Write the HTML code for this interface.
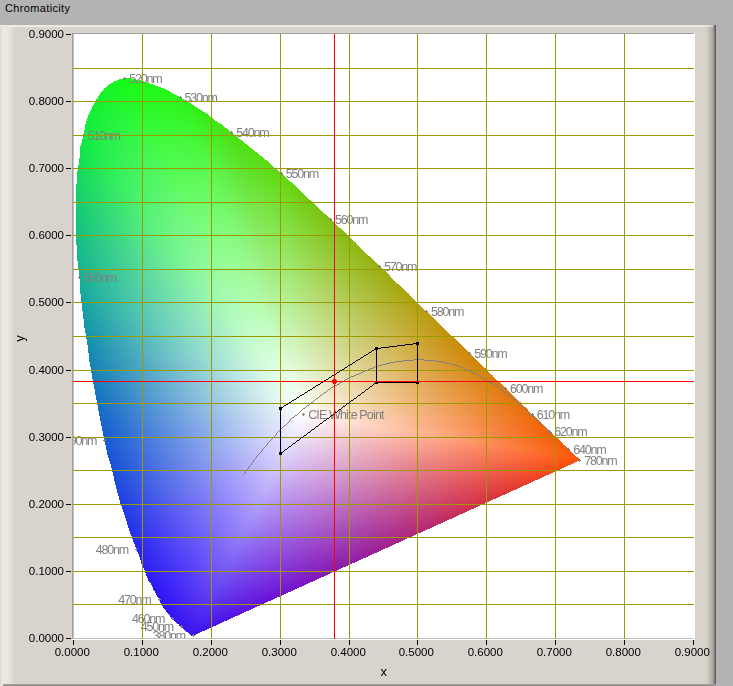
<!DOCTYPE html>
<html><head><meta charset="utf-8"><title>Chromaticity</title>
<style>
html,body{margin:0;padding:0;}
body{width:733px;height:686px;overflow:hidden;background:#b3b3b3;position:relative;font-family:"Liberation Sans",sans-serif;}
.a{position:absolute;}
#title{left:5px;top:2px;font-size:11px;letter-spacing:0.35px;color:#000;}
#panel{left:0;top:25px;width:716px;height:661px;background:#d8d4cd;}
#ltop{left:0;top:0;width:713px;height:2px;background:linear-gradient(to right,#eeeae1 0,#eeeae1 700px,#e6e2d9 708px,#d0ccc4 713px);}
#lgrad{left:0;top:2px;width:14px;height:659px;background:linear-gradient(to right,#dcd8d0 0px,#e6e2d9 1.5px,#eeeae1 3px,#ebe7df 6px,#e6e2da 10px,#e0dcd3 12.5px,#d8d4cd 14px);}
#rgrad{left:703px;top:0px;width:13px;height:661px;background:linear-gradient(to right,#d8d4cd 0px,#d6d2c8 3px,#c6c2ba 6px,#b0aca4 9px,#98948d 11px,#6c6a64 12px,#4e4c48 13px);}
#bot{left:3px;top:659px;width:713px;height:2px;background:linear-gradient(to bottom,#a6a29a,#8e8a84);}
canvas{position:absolute;left:0;top:0;}
#labs{left:74px;top:34px;width:620px;height:604px;overflow:hidden;}
.l{position:absolute;font-size:12.5px;letter-spacing:-1.2px;color:#808080;white-space:nowrap;line-height:12px;}
.yl{position:absolute;font-size:11.5px;color:#000;line-height:12px;text-align:right;width:60px;}
.xl{position:absolute;font-size:11.5px;color:#000;line-height:12px;text-align:center;width:60px;}
</style></head>
<body>
<div id="title" class="a">Chromaticity</div>
<div id="panel" class="a"><div id="lgrad" class="a"></div><div id="rgrad" class="a"></div><div id="ltop" class="a"></div><div id="bot" class="a"></div></div>
<svg class="a" style="left:0;top:0" width="733" height="686"><defs><linearGradient id="g0" gradientUnits="userSpaceOnUse" x1="302.6" y1="414.3" x2="257.3" y2="647.2"><stop offset="0" stop-color="#fff"/><stop offset="1" stop-color="rgb(60,20,240)"/></linearGradient><linearGradient id="g1" gradientUnits="userSpaceOnUse" x1="302.6" y1="414.3" x2="351.7" y2="590.5"><stop offset="0" stop-color="#fff"/><stop offset="1" stop-color="rgb(60,20,240)"/></linearGradient><linearGradient id="g2" gradientUnits="userSpaceOnUse" x1="302.6" y1="414.3" x2="302.6" y2="634.7"><stop offset="0" stop-color="#fff"/><stop offset="1" stop-color="rgb(60,20,240)"/></linearGradient><linearGradient id="g3" gradientUnits="userSpaceOnUse" x1="302.6" y1="414.3" x2="369.7" y2="540.6"><stop offset="0" stop-color="#fff"/><stop offset="1" stop-color="rgb(60,20,240)"/></linearGradient><linearGradient id="g4" gradientUnits="userSpaceOnUse" x1="302.6" y1="414.3" x2="315.6" y2="627.3"><stop offset="0" stop-color="#fff"/><stop offset="1" stop-color="rgb(60,20,240)"/></linearGradient><linearGradient id="g5" gradientUnits="userSpaceOnUse" x1="302.6" y1="414.3" x2="292.7" y2="639.2"><stop offset="0" stop-color="#fff"/><stop offset="1" stop-color="rgb(60,20,240)"/></linearGradient><linearGradient id="g6" gradientUnits="userSpaceOnUse" x1="302.6" y1="414.3" x2="289.1" y2="640.6"><stop offset="0" stop-color="#fff"/><stop offset="1" stop-color="rgb(60,20,240)"/></linearGradient><linearGradient id="g7" gradientUnits="userSpaceOnUse" x1="302.6" y1="414.3" x2="214.0" y2="643.4"><stop offset="0" stop-color="#fff"/><stop offset="1" stop-color="rgb(60,20,240)"/></linearGradient><linearGradient id="g8" gradientUnits="userSpaceOnUse" x1="302.6" y1="414.3" x2="175.1" y2="624.9"><stop offset="0" stop-color="#fff"/><stop offset="1" stop-color="rgb(60,20,240)"/></linearGradient><linearGradient id="g9" gradientUnits="userSpaceOnUse" x1="302.6" y1="414.3" x2="155.5" y2="607.6"><stop offset="0" stop-color="#fff"/><stop offset="1" stop-color="rgb(60,20,240)"/></linearGradient><linearGradient id="g10" gradientUnits="userSpaceOnUse" x1="302.6" y1="414.3" x2="150.0" y2="601.2"><stop offset="0" stop-color="#fff"/><stop offset="1" stop-color="rgb(60,20,240)"/></linearGradient><linearGradient id="g11" gradientUnits="userSpaceOnUse" x1="302.6" y1="414.3" x2="143.0" y2="591.7"><stop offset="0" stop-color="#fff"/><stop offset="1" stop-color="rgb(60,20,240)"/></linearGradient><linearGradient id="g12" gradientUnits="userSpaceOnUse" x1="302.6" y1="414.3" x2="146.0" y2="596.0"><stop offset="0" stop-color="#fff"/><stop offset="1" stop-color="rgb(60,20,240)"/></linearGradient><linearGradient id="g13" gradientUnits="userSpaceOnUse" x1="302.6" y1="414.3" x2="146.7" y2="596.9"><stop offset="0" stop-color="#fff"/><stop offset="1" stop-color="rgb(60,20,240)"/></linearGradient><linearGradient id="g14" gradientUnits="userSpaceOnUse" x1="302.6" y1="414.3" x2="145.4" y2="595.2"><stop offset="0" stop-color="#fff"/><stop offset="1" stop-color="rgb(58,20,241)"/></linearGradient><linearGradient id="g15" gradientUnits="userSpaceOnUse" x1="302.6" y1="414.3" x2="137.9" y2="585.0"><stop offset="0" stop-color="#fff"/><stop offset="1" stop-color="rgb(54,20,243)"/></linearGradient><linearGradient id="g16" gradientUnits="userSpaceOnUse" x1="302.6" y1="414.3" x2="126.5" y2="564.5"><stop offset="0" stop-color="#fff"/><stop offset="1" stop-color="rgb(50,19,245)"/></linearGradient><linearGradient id="g17" gradientUnits="userSpaceOnUse" x1="302.6" y1="414.3" x2="116.9" y2="535.4"><stop offset="0" stop-color="#fff"/><stop offset="1" stop-color="rgb(46,18,247)"/></linearGradient><linearGradient id="g18" gradientUnits="userSpaceOnUse" x1="302.6" y1="414.3" x2="113.4" y2="511.5"><stop offset="0" stop-color="#fff"/><stop offset="1" stop-color="rgb(43,22,246)"/></linearGradient><linearGradient id="g19" gradientUnits="userSpaceOnUse" x1="302.6" y1="414.3" x2="112.6" y2="492.1"><stop offset="0" stop-color="#fff"/><stop offset="1" stop-color="rgb(41,31,242)"/></linearGradient><linearGradient id="g20" gradientUnits="userSpaceOnUse" x1="302.6" y1="414.3" x2="112.1" y2="479.2"><stop offset="0" stop-color="#fff"/><stop offset="1" stop-color="rgb(35,49,232)"/></linearGradient><linearGradient id="g21" gradientUnits="userSpaceOnUse" x1="302.6" y1="414.3" x2="110.1" y2="463.2"><stop offset="0" stop-color="#fff"/><stop offset="1" stop-color="rgb(25,76,217)"/></linearGradient><linearGradient id="g22" gradientUnits="userSpaceOnUse" x1="302.6" y1="414.3" x2="106.5" y2="451.8"><stop offset="0" stop-color="#fff"/><stop offset="1" stop-color="rgb(20,111,195)"/></linearGradient><linearGradient id="g23" gradientUnits="userSpaceOnUse" x1="302.6" y1="414.3" x2="99.0" y2="439.7"><stop offset="0" stop-color="#fff"/><stop offset="1" stop-color="rgb(20,154,165)"/></linearGradient><linearGradient id="g24" gradientUnits="userSpaceOnUse" x1="302.6" y1="414.3" x2="84.2" y2="422.6"><stop offset="0" stop-color="#fff"/><stop offset="1" stop-color="rgb(19,191,128)"/></linearGradient><linearGradient id="g25" gradientUnits="userSpaceOnUse" x1="302.6" y1="414.3" x2="55.3" y2="387.6"><stop offset="0" stop-color="#fff"/><stop offset="1" stop-color="rgb(17,221,85)"/></linearGradient><linearGradient id="g26" gradientUnits="userSpaceOnUse" x1="302.6" y1="414.3" x2="15.9" y2="295.4"><stop offset="0" stop-color="#fff"/><stop offset="1" stop-color="rgb(17,239,53)"/></linearGradient><linearGradient id="g27" gradientUnits="userSpaceOnUse" x1="302.6" y1="414.3" x2="107.6" y2="88.4"><stop offset="0" stop-color="#fff"/><stop offset="1" stop-color="rgb(19,246,31)"/></linearGradient><linearGradient id="g28" gradientUnits="userSpaceOnUse" x1="302.6" y1="414.3" x2="356.9" y2="121.6"><stop offset="0" stop-color="#fff"/><stop offset="1" stop-color="rgb(25,248,21)"/></linearGradient><linearGradient id="g29" gradientUnits="userSpaceOnUse" x1="302.6" y1="414.3" x2="404.0" y2="206.9"><stop offset="0" stop-color="#fff"/><stop offset="1" stop-color="rgb(35,246,23)"/></linearGradient><linearGradient id="g30" gradientUnits="userSpaceOnUse" x1="302.6" y1="414.3" x2="410.5" y2="240.0"><stop offset="0" stop-color="#fff"/><stop offset="1" stop-color="rgb(48,239,22)"/></linearGradient><linearGradient id="g31" gradientUnits="userSpaceOnUse" x1="302.6" y1="414.3" x2="412.3" y2="262.8"><stop offset="0" stop-color="#fff"/><stop offset="1" stop-color="rgb(64,229,18)"/></linearGradient><linearGradient id="g32" gradientUnits="userSpaceOnUse" x1="302.6" y1="414.3" x2="412.5" y2="278.4"><stop offset="0" stop-color="#fff"/><stop offset="1" stop-color="rgb(78,222,16)"/></linearGradient><linearGradient id="g33" gradientUnits="userSpaceOnUse" x1="302.6" y1="414.3" x2="412.5" y2="288.1"><stop offset="0" stop-color="#fff"/><stop offset="1" stop-color="rgb(90,218,16)"/></linearGradient><linearGradient id="g34" gradientUnits="userSpaceOnUse" x1="302.6" y1="414.3" x2="412.7" y2="293.6"><stop offset="0" stop-color="#fff"/><stop offset="1" stop-color="rgb(104,210,16)"/></linearGradient><linearGradient id="g35" gradientUnits="userSpaceOnUse" x1="302.6" y1="414.3" x2="412.9" y2="296.7"><stop offset="0" stop-color="#fff"/><stop offset="1" stop-color="rgb(120,198,16)"/></linearGradient><linearGradient id="g36" gradientUnits="userSpaceOnUse" x1="302.6" y1="414.3" x2="413.2" y2="298.2"><stop offset="0" stop-color="#fff"/><stop offset="1" stop-color="rgb(134,188,16)"/></linearGradient><linearGradient id="g37" gradientUnits="userSpaceOnUse" x1="302.6" y1="414.3" x2="413.5" y2="299.1"><stop offset="0" stop-color="#fff"/><stop offset="1" stop-color="rgb(146,180,16)"/></linearGradient><linearGradient id="g38" gradientUnits="userSpaceOnUse" x1="302.6" y1="414.3" x2="413.8" y2="299.5"><stop offset="0" stop-color="#fff"/><stop offset="1" stop-color="rgb(160,171,16)"/></linearGradient><linearGradient id="g39" gradientUnits="userSpaceOnUse" x1="302.6" y1="414.3" x2="413.9" y2="299.7"><stop offset="0" stop-color="#fff"/><stop offset="1" stop-color="rgb(176,161,16)"/></linearGradient><linearGradient id="g40" gradientUnits="userSpaceOnUse" x1="302.6" y1="414.3" x2="413.9" y2="299.6"><stop offset="0" stop-color="#fff"/><stop offset="1" stop-color="rgb(190,151,14)"/></linearGradient><linearGradient id="g41" gradientUnits="userSpaceOnUse" x1="302.6" y1="414.3" x2="413.8" y2="299.6"><stop offset="0" stop-color="#fff"/><stop offset="1" stop-color="rgb(202,141,10)"/></linearGradient><linearGradient id="g42" gradientUnits="userSpaceOnUse" x1="302.6" y1="414.3" x2="414.1" y2="299.7"><stop offset="0" stop-color="#fff"/><stop offset="1" stop-color="rgb(212,132,8)"/></linearGradient><linearGradient id="g43" gradientUnits="userSpaceOnUse" x1="302.6" y1="414.3" x2="413.9" y2="299.6"><stop offset="0" stop-color="#fff"/><stop offset="1" stop-color="rgb(220,124,8)"/></linearGradient><linearGradient id="g44" gradientUnits="userSpaceOnUse" x1="302.6" y1="414.3" x2="413.9" y2="299.6"><stop offset="0" stop-color="#fff"/><stop offset="1" stop-color="rgb(226,116,8)"/></linearGradient><linearGradient id="g45" gradientUnits="userSpaceOnUse" x1="302.6" y1="414.3" x2="413.4" y2="299.6"><stop offset="0" stop-color="#fff"/><stop offset="1" stop-color="rgb(231,110,8)"/></linearGradient><linearGradient id="g46" gradientUnits="userSpaceOnUse" x1="302.6" y1="414.3" x2="413.9" y2="299.6"><stop offset="0" stop-color="#fff"/><stop offset="1" stop-color="rgb(237,104,8)"/></linearGradient><linearGradient id="g47" gradientUnits="userSpaceOnUse" x1="302.6" y1="414.3" x2="414.3" y2="299.6"><stop offset="0" stop-color="#fff"/><stop offset="1" stop-color="rgb(242,98,8)"/></linearGradient><linearGradient id="g48" gradientUnits="userSpaceOnUse" x1="302.6" y1="414.3" x2="413.4" y2="299.7"><stop offset="0" stop-color="#fff"/><stop offset="1" stop-color="rgb(245,94,8)"/></linearGradient><linearGradient id="g49" gradientUnits="userSpaceOnUse" x1="302.6" y1="414.3" x2="413.7" y2="299.6"><stop offset="0" stop-color="#fff"/><stop offset="1" stop-color="rgb(245,93,8)"/></linearGradient><linearGradient id="g50" gradientUnits="userSpaceOnUse" x1="302.6" y1="414.3" x2="414.2" y2="299.6"><stop offset="0" stop-color="#fff"/><stop offset="1" stop-color="rgb(246,92,8)"/></linearGradient><linearGradient id="g51" gradientUnits="userSpaceOnUse" x1="302.6" y1="414.3" x2="414.4" y2="299.5"><stop offset="0" stop-color="#fff"/><stop offset="1" stop-color="rgb(247,91,8)"/></linearGradient><linearGradient id="g52" gradientUnits="userSpaceOnUse" x1="302.6" y1="414.3" x2="413.8" y2="299.6"><stop offset="0" stop-color="#fff"/><stop offset="1" stop-color="rgb(247,90,8)"/></linearGradient><linearGradient id="g53" gradientUnits="userSpaceOnUse" x1="302.6" y1="414.3" x2="413.5" y2="299.7"><stop offset="0" stop-color="#fff"/><stop offset="1" stop-color="rgb(248,89,8)"/></linearGradient><linearGradient id="g54" gradientUnits="userSpaceOnUse" x1="302.6" y1="414.3" x2="414.4" y2="299.5"><stop offset="0" stop-color="#fff"/><stop offset="1" stop-color="rgb(249,88,8)"/></linearGradient><linearGradient id="g55" gradientUnits="userSpaceOnUse" x1="302.6" y1="414.3" x2="414.4" y2="299.5"><stop offset="0" stop-color="#fff"/><stop offset="1" stop-color="rgb(249,87,8)"/></linearGradient><linearGradient id="g56" gradientUnits="userSpaceOnUse" x1="302.6" y1="414.3" x2="414.4" y2="299.5"><stop offset="0" stop-color="#fff"/><stop offset="1" stop-color="rgb(250,87,8)"/></linearGradient><linearGradient id="g57" gradientUnits="userSpaceOnUse" x1="302.6" y1="414.3" x2="414.4" y2="299.5"><stop offset="0" stop-color="#fff"/><stop offset="1" stop-color="rgb(250,86,8)"/></linearGradient><linearGradient id="g58" gradientUnits="userSpaceOnUse" x1="302.6" y1="414.3" x2="414.4" y2="299.5"><stop offset="0" stop-color="#fff"/><stop offset="1" stop-color="rgb(251,85,8)"/></linearGradient><linearGradient id="g59" gradientUnits="userSpaceOnUse" x1="302.6" y1="414.3" x2="414.4" y2="299.5"><stop offset="0" stop-color="#fff"/><stop offset="1" stop-color="rgb(252,84,8)"/></linearGradient><linearGradient id="g60" gradientUnits="userSpaceOnUse" x1="302.6" y1="414.3" x2="414.4" y2="299.5"><stop offset="0" stop-color="#fff"/><stop offset="1" stop-color="rgb(252,83,8)"/></linearGradient><linearGradient id="g61" gradientUnits="userSpaceOnUse" x1="302.6" y1="414.3" x2="414.4" y2="299.5"><stop offset="0" stop-color="#fff"/><stop offset="1" stop-color="rgb(253,82,8)"/></linearGradient><linearGradient id="g62" gradientUnits="userSpaceOnUse" x1="302.6" y1="414.3" x2="414.4" y2="299.5"><stop offset="0" stop-color="#fff"/><stop offset="1" stop-color="rgb(254,81,8)"/></linearGradient><linearGradient id="g63" gradientUnits="userSpaceOnUse" x1="302.6" y1="414.3" x2="414.4" y2="299.5"><stop offset="0" stop-color="#fff"/><stop offset="1" stop-color="rgb(254,80,8)"/></linearGradient><linearGradient id="g64" gradientUnits="userSpaceOnUse" x1="302.6" y1="414.3" x2="366.8" y2="556.0"><stop offset="0" stop-color="#fff"/><stop offset="1" stop-color="rgb(247,74,18)"/></linearGradient><linearGradient id="g65" gradientUnits="userSpaceOnUse" x1="302.6" y1="414.3" x2="366.8" y2="556.0"><stop offset="0" stop-color="#fff"/><stop offset="1" stop-color="rgb(233,62,38)"/></linearGradient><linearGradient id="g66" gradientUnits="userSpaceOnUse" x1="302.6" y1="414.3" x2="366.8" y2="556.0"><stop offset="0" stop-color="#fff"/><stop offset="1" stop-color="rgb(219,51,59)"/></linearGradient><linearGradient id="g67" gradientUnits="userSpaceOnUse" x1="302.6" y1="414.3" x2="366.8" y2="556.0"><stop offset="0" stop-color="#fff"/><stop offset="1" stop-color="rgb(203,44,82)"/></linearGradient><linearGradient id="g68" gradientUnits="userSpaceOnUse" x1="302.6" y1="414.3" x2="366.8" y2="556.0"><stop offset="0" stop-color="#fff"/><stop offset="1" stop-color="rgb(185,39,106)"/></linearGradient><linearGradient id="g69" gradientUnits="userSpaceOnUse" x1="302.6" y1="414.3" x2="366.8" y2="556.0"><stop offset="0" stop-color="#fff"/><stop offset="1" stop-color="rgb(168,34,131)"/></linearGradient><linearGradient id="g70" gradientUnits="userSpaceOnUse" x1="302.6" y1="414.3" x2="366.8" y2="556.0"><stop offset="0" stop-color="#fff"/><stop offset="1" stop-color="rgb(152,29,154)"/></linearGradient><linearGradient id="g71" gradientUnits="userSpaceOnUse" x1="302.6" y1="414.3" x2="366.8" y2="556.0"><stop offset="0" stop-color="#fff"/><stop offset="1" stop-color="rgb(137,25,174)"/></linearGradient><linearGradient id="g72" gradientUnits="userSpaceOnUse" x1="302.6" y1="414.3" x2="366.8" y2="556.0"><stop offset="0" stop-color="#fff"/><stop offset="1" stop-color="rgb(122,20,194)"/></linearGradient><linearGradient id="g73" gradientUnits="userSpaceOnUse" x1="302.6" y1="414.3" x2="366.8" y2="556.0"><stop offset="0" stop-color="#fff"/><stop offset="1" stop-color="rgb(106,17,212)"/></linearGradient><linearGradient id="g74" gradientUnits="userSpaceOnUse" x1="302.6" y1="414.3" x2="366.8" y2="556.0"><stop offset="0" stop-color="#fff"/><stop offset="1" stop-color="rgb(88,17,225)"/></linearGradient><linearGradient id="g75" gradientUnits="userSpaceOnUse" x1="302.6" y1="414.3" x2="366.8" y2="556.0"><stop offset="0" stop-color="#fff"/><stop offset="1" stop-color="rgb(69,19,235)"/></linearGradient></defs><rect x="72" y="33" width="623" height="607" fill="#fff"/><rect x="72" y="33" width="1" height="606" fill="#a0a0a0"/><rect x="72" y="33" width="622" height="1" fill="#a0a0a0"/><rect x="73" y="34" width="1" height="604" fill="#c0c0c0"/><rect x="73" y="638" width="621" height="1" fill="#c0c0c0"/><path d="M302.6 414.3L192.9 634.7L192.9 634.7Z" fill="url(#g0)" stroke="url(#g0)" stroke-width="0.6"/><path d="M302.6 414.3L192.9 634.7L192.7 634.7Z" fill="url(#g1)" stroke="url(#g1)" stroke-width="0.6"/><path d="M302.6 414.3L192.7 634.7L192.6 634.7Z" fill="url(#g2)" stroke="url(#g2)" stroke-width="0.6"/><path d="M302.6 414.3L192.6 634.7L192.4 634.8Z" fill="url(#g3)" stroke="url(#g3)" stroke-width="0.6"/><path d="M302.6 414.3L192.4 634.8L192.2 634.8Z" fill="url(#g4)" stroke="url(#g4)" stroke-width="0.6"/><path d="M302.6 414.3L192.2 634.8L191.9 634.8Z" fill="url(#g5)" stroke="url(#g5)" stroke-width="0.6"/><path d="M302.6 414.3L191.9 634.8L191.6 634.8Z" fill="url(#g6)" stroke="url(#g6)" stroke-width="0.6"/><path d="M302.6 414.3L191.6 634.8L191.1 634.6Z" fill="url(#g7)" stroke="url(#g7)" stroke-width="0.6"/><path d="M302.6 414.3L191.1 634.6L190.3 634.1Z" fill="url(#g8)" stroke="url(#g8)" stroke-width="0.6"/><path d="M302.6 414.3L190.3 634.1L189.3 633.4Z" fill="url(#g9)" stroke="url(#g9)" stroke-width="0.6"/><path d="M302.6 414.3L189.3 633.4L188.0 632.3Z" fill="url(#g10)" stroke="url(#g10)" stroke-width="0.6"/><path d="M302.6 414.3L188.0 632.3L186.3 630.7Z" fill="url(#g11)" stroke="url(#g11)" stroke-width="0.6"/><path d="M302.6 414.3L186.3 630.7L184.0 628.7Z" fill="url(#g12)" stroke="url(#g12)" stroke-width="0.6"/><path d="M302.6 414.3L184.0 628.7L180.9 626.1Z" fill="url(#g13)" stroke="url(#g13)" stroke-width="0.6"/><path d="M302.6 414.3L180.9 626.1L177.0 622.7Z" fill="url(#g14)" stroke="url(#g14)" stroke-width="0.6"/><path d="M302.6 414.3L177.0 622.7L172.2 618.1Z" fill="url(#g15)" stroke="url(#g15)" stroke-width="0.6"/><path d="M302.6 414.3L172.2 618.1L166.3 611.2Z" fill="url(#g16)" stroke="url(#g16)" stroke-width="0.6"/><path d="M302.6 414.3L166.3 611.2L158.5 599.2Z" fill="url(#g17)" stroke="url(#g17)" stroke-width="0.6"/><path d="M302.6 414.3L158.5 599.2L148.5 579.7Z" fill="url(#g18)" stroke="url(#g18)" stroke-width="0.6"/><path d="M302.6 414.3L148.5 579.7L135.9 548.9Z" fill="url(#g19)" stroke="url(#g19)" stroke-width="0.6"/><path d="M302.6 414.3L135.9 548.9L120.3 503.3Z" fill="url(#g20)" stroke="url(#g20)" stroke-width="0.6"/><path d="M302.6 414.3L120.3 503.3L104.3 440.0Z" fill="url(#g21)" stroke="url(#g21)" stroke-width="0.6"/><path d="M302.6 414.3L104.3 440.0L89.2 361.0Z" fill="url(#g22)" stroke="url(#g22)" stroke-width="0.6"/><path d="M302.6 414.3L89.2 361.0L78.6 276.7Z" fill="url(#g23)" stroke="url(#g23)" stroke-width="0.6"/><path d="M302.6 414.3L78.6 276.7L75.7 198.5Z" fill="url(#g24)" stroke="url(#g24)" stroke-width="0.6"/><path d="M302.6 414.3L75.7 198.5L82.6 134.5Z" fill="url(#g25)" stroke="url(#g25)" stroke-width="0.6"/><path d="M302.6 414.3L82.6 134.5L99.8 93.0Z" fill="url(#g26)" stroke="url(#g26)" stroke-width="0.6"/><path d="M302.6 414.3L99.8 93.0L124.2 78.4Z" fill="url(#g27)" stroke="url(#g27)" stroke-width="0.6"/><path d="M302.6 414.3L124.2 78.4L151.6 83.5Z" fill="url(#g28)" stroke="url(#g28)" stroke-width="0.6"/><path d="M302.6 414.3L151.6 83.5L179.6 97.2Z" fill="url(#g29)" stroke="url(#g29)" stroke-width="0.6"/><path d="M302.6 414.3L179.6 97.2L205.9 113.4Z" fill="url(#g30)" stroke="url(#g30)" stroke-width="0.6"/><path d="M302.6 414.3L205.9 113.4L231.2 131.8Z" fill="url(#g31)" stroke="url(#g31)" stroke-width="0.6"/><path d="M302.6 414.3L231.2 131.8L256.1 151.9Z" fill="url(#g32)" stroke="url(#g32)" stroke-width="0.6"/><path d="M302.6 414.3L256.1 151.9L280.8 173.4Z" fill="url(#g33)" stroke="url(#g33)" stroke-width="0.6"/><path d="M302.6 414.3L280.8 173.4L305.4 195.8Z" fill="url(#g34)" stroke="url(#g34)" stroke-width="0.6"/><path d="M302.6 414.3L305.4 195.8L330.0 218.9Z" fill="url(#g35)" stroke="url(#g35)" stroke-width="0.6"/><path d="M302.6 414.3L330.0 218.9L354.6 242.3Z" fill="url(#g36)" stroke="url(#g36)" stroke-width="0.6"/><path d="M302.6 414.3L354.6 242.3L378.9 265.7Z" fill="url(#g37)" stroke="url(#g37)" stroke-width="0.6"/><path d="M302.6 414.3L378.9 265.7L402.8 288.9Z" fill="url(#g38)" stroke="url(#g38)" stroke-width="0.6"/><path d="M302.6 414.3L402.8 288.9L426.0 311.4Z" fill="url(#g39)" stroke="url(#g39)" stroke-width="0.6"/><path d="M302.6 414.3L426.0 311.4L448.3 333.0Z" fill="url(#g40)" stroke="url(#g40)" stroke-width="0.6"/><path d="M302.6 414.3L448.3 333.0L469.2 353.3Z" fill="url(#g41)" stroke="url(#g41)" stroke-width="0.6"/><path d="M302.6 414.3L469.2 353.3L488.4 371.9Z" fill="url(#g42)" stroke="url(#g42)" stroke-width="0.6"/><path d="M302.6 414.3L488.4 371.9L505.0 388.0Z" fill="url(#g43)" stroke="url(#g43)" stroke-width="0.6"/><path d="M302.6 414.3L505.0 388.0L519.6 402.2Z" fill="url(#g44)" stroke="url(#g44)" stroke-width="0.6"/><path d="M302.6 414.3L519.6 402.2L531.6 413.8Z" fill="url(#g45)" stroke="url(#g45)" stroke-width="0.6"/><path d="M302.6 414.3L531.6 413.8L541.5 423.4Z" fill="url(#g46)" stroke="url(#g46)" stroke-width="0.6"/><path d="M302.6 414.3L541.5 423.4L549.4 431.1Z" fill="url(#g47)" stroke="url(#g47)" stroke-width="0.6"/><path d="M302.6 414.3L549.4 431.1L555.6 437.1Z" fill="url(#g48)" stroke="url(#g48)" stroke-width="0.6"/><path d="M302.6 414.3L555.6 437.1L560.7 442.0Z" fill="url(#g49)" stroke="url(#g49)" stroke-width="0.6"/><path d="M302.6 414.3L560.7 442.0L564.9 446.1Z" fill="url(#g50)" stroke="url(#g50)" stroke-width="0.6"/><path d="M302.6 414.3L564.9 446.1L568.3 449.5Z" fill="url(#g51)" stroke="url(#g51)" stroke-width="0.6"/><path d="M302.6 414.3L568.3 449.5L571.1 452.1Z" fill="url(#g52)" stroke="url(#g52)" stroke-width="0.6"/><path d="M302.6 414.3L571.1 452.1L573.1 454.1Z" fill="url(#g53)" stroke="url(#g53)" stroke-width="0.6"/><path d="M302.6 414.3L573.1 454.1L574.7 455.6Z" fill="url(#g54)" stroke="url(#g54)" stroke-width="0.6"/><path d="M302.6 414.3L574.7 455.6L575.9 456.8Z" fill="url(#g55)" stroke="url(#g55)" stroke-width="0.6"/><path d="M302.6 414.3L575.9 456.8L576.6 457.5Z" fill="url(#g56)" stroke="url(#g56)" stroke-width="0.6"/><path d="M302.6 414.3L576.6 457.5L577.3 458.1Z" fill="url(#g57)" stroke="url(#g57)" stroke-width="0.6"/><path d="M302.6 414.3L577.3 458.1L577.8 458.6Z" fill="url(#g58)" stroke="url(#g58)" stroke-width="0.6"/><path d="M302.6 414.3L577.8 458.6L578.2 459.1Z" fill="url(#g59)" stroke="url(#g59)" stroke-width="0.6"/><path d="M302.6 414.3L578.2 459.1L578.7 459.5Z" fill="url(#g60)" stroke="url(#g60)" stroke-width="0.6"/><path d="M302.6 414.3L578.7 459.5L578.9 459.7Z" fill="url(#g61)" stroke="url(#g61)" stroke-width="0.6"/><path d="M302.6 414.3L578.9 459.7L579.1 459.9Z" fill="url(#g62)" stroke="url(#g62)" stroke-width="0.6"/><path d="M302.6 414.3L579.1 459.9L579.1 459.9Z" fill="url(#g63)" stroke="url(#g63)" stroke-width="0.6"/><path d="M302.6 414.3L579.1 459.9L546.9 474.5Z" fill="url(#g64)" stroke="url(#g64)" stroke-width="0.6"/><path d="M302.6 414.3L546.9 474.5L514.8 489.1Z" fill="url(#g65)" stroke="url(#g65)" stroke-width="0.6"/><path d="M302.6 414.3L514.8 489.1L482.6 503.6Z" fill="url(#g66)" stroke="url(#g66)" stroke-width="0.6"/><path d="M302.6 414.3L482.6 503.6L450.4 518.2Z" fill="url(#g67)" stroke="url(#g67)" stroke-width="0.6"/><path d="M302.6 414.3L450.4 518.2L418.2 532.7Z" fill="url(#g68)" stroke="url(#g68)" stroke-width="0.6"/><path d="M302.6 414.3L418.2 532.7L386.0 547.3Z" fill="url(#g69)" stroke="url(#g69)" stroke-width="0.6"/><path d="M302.6 414.3L386.0 547.3L353.8 561.9Z" fill="url(#g70)" stroke="url(#g70)" stroke-width="0.6"/><path d="M302.6 414.3L353.8 561.9L321.7 576.4Z" fill="url(#g71)" stroke="url(#g71)" stroke-width="0.6"/><path d="M302.6 414.3L321.7 576.4L289.5 591.0Z" fill="url(#g72)" stroke="url(#g72)" stroke-width="0.6"/><path d="M302.6 414.3L289.5 591.0L257.3 605.6Z" fill="url(#g73)" stroke="url(#g73)" stroke-width="0.6"/><path d="M302.6 414.3L257.3 605.6L225.1 620.1Z" fill="url(#g74)" stroke="url(#g74)" stroke-width="0.6"/><path d="M302.6 414.3L225.1 620.1L192.9 634.7Z" fill="url(#g75)" stroke="url(#g75)" stroke-width="0.6"/><rect x="142" y="34" width="1" height="605" fill="#9a9a00"/><rect x="211" y="34" width="1" height="605" fill="#9a9a00"/><rect x="280" y="34" width="1" height="605" fill="#9a9a00"/><rect x="349" y="34" width="1" height="605" fill="#9a9a00"/><rect x="417" y="34" width="1" height="605" fill="#9a9a00"/><rect x="486" y="34" width="1" height="605" fill="#9a9a00"/><rect x="555" y="34" width="1" height="605" fill="#9a9a00"/><rect x="624" y="34" width="1" height="605" fill="#9a9a00"/><rect x="73" y="604" width="621" height="1" fill="#9a9a00"/><rect x="73" y="571" width="621" height="1" fill="#9a9a00"/><rect x="73" y="537" width="621" height="1" fill="#9a9a00"/><rect x="73" y="504" width="621" height="1" fill="#9a9a00"/><rect x="73" y="470" width="621" height="1" fill="#9a9a00"/><rect x="73" y="437" width="621" height="1" fill="#9a9a00"/><rect x="73" y="403" width="621" height="1" fill="#9a9a00"/><rect x="73" y="370" width="621" height="1" fill="#9a9a00"/><rect x="73" y="336" width="621" height="1" fill="#9a9a00"/><rect x="73" y="302" width="621" height="1" fill="#9a9a00"/><rect x="73" y="269" width="621" height="1" fill="#9a9a00"/><rect x="73" y="235" width="621" height="1" fill="#9a9a00"/><rect x="73" y="202" width="621" height="1" fill="#9a9a00"/><rect x="73" y="168" width="621" height="1" fill="#9a9a00"/><rect x="73" y="135" width="621" height="1" fill="#9a9a00"/><rect x="73" y="101" width="621" height="1" fill="#9a9a00"/><rect x="73" y="68" width="621" height="1" fill="#9a9a00"/><polyline fill="none" stroke="#808080" stroke-width="1" points="552.1,433.8 547.3,429.3 542.1,424.3 536.4,419.1 530.4,413.6 524.0,407.9 517.2,402.2 510.0,396.3 502.5,390.6 494.6,385.0 486.3,379.6 477.5,374.7 468.4,370.3 458.9,366.5 449.1,363.4 439.0,361.2 428.7,359.8 418.1,359.3 407.6,359.8 397.0,361.0 386.5,363.2 376.2,366.1 366.3,369.6 356.6,373.7 347.4,378.2 338.6,383.0 330.4,388.1 322.6,393.3 315.4,398.5 308.6,403.7 302.4,408.8 296.7,413.8 291.4,418.5 286.6,423.0 282.3,427.3 278.3,431.4 274.7,435.3 271.4,438.8 268.4,442.1 265.8,445.2 263.3,448.0 261.1,450.6 259.1,453.0 257.3,455.3 255.7,457.3 254.2,459.1 252.9,460.9 251.7,462.4 250.6,463.9 249.6,465.3 248.7,466.5 247.8,467.5 247.1,468.6 246.4,469.6 245.8,470.4 245.2,471.2 244.6,471.9 244.1,472.6 243.7,473.2 243.3,473.8"/><polyline fill="none" stroke="#000" stroke-width="1" points="280.5,408.5 376.5,348.5 417.5,343.5 417.5,382.5 376.5,382.5 280.5,453.5 280.5,408.5"/><path d="M376.5 348.5V382.5" stroke="#000"/><rect x="334" y="34" width="1" height="605" fill="#f00"/><rect x="73" y="381" width="621" height="1" fill="#f00"/><circle cx="334.5" cy="381.5" r="2.6" fill="#f00"/><rect x="73" y="640" width="1" height="5" fill="#000"/><rect x="66" y="638" width="5" height="1" fill="#000"/><rect x="142" y="640" width="1" height="5" fill="#000"/><rect x="66" y="571" width="5" height="1" fill="#000"/><rect x="211" y="640" width="1" height="5" fill="#000"/><rect x="66" y="504" width="5" height="1" fill="#000"/><rect x="280" y="640" width="1" height="5" fill="#000"/><rect x="66" y="437" width="5" height="1" fill="#000"/><rect x="349" y="640" width="1" height="5" fill="#000"/><rect x="66" y="370" width="5" height="1" fill="#000"/><rect x="417" y="640" width="1" height="5" fill="#000"/><rect x="66" y="302" width="5" height="1" fill="#000"/><rect x="486" y="640" width="1" height="5" fill="#000"/><rect x="66" y="235" width="5" height="1" fill="#000"/><rect x="555" y="640" width="1" height="5" fill="#000"/><rect x="66" y="168" width="5" height="1" fill="#000"/><rect x="624" y="640" width="1" height="5" fill="#000"/><rect x="66" y="101" width="5" height="1" fill="#000"/><rect x="693" y="640" width="1" height="5" fill="#000"/><rect x="66" y="34" width="5" height="1" fill="#000"/></svg>
<canvas id="cv" width="733" height="686"></canvas>
<div id="labs" class="a">
<div class="l" style="left:9.63px;top:237.66px">500nm</div>
<div class="l" style="left:13.55px;top:95.54px">510nm</div>
<div class="l" style="left:55.18px;top:39.43px">520nm</div>
<div class="l" style="left:110.58px;top:58.18px">530nm</div>
<div class="l" style="left:162.18px;top:92.76px">540nm</div>
<div class="l" style="left:211.77px;top:134.38px">550nm</div>
<div class="l" style="left:261.02px;top:179.92px">560nm</div>
<div class="l" style="left:309.91px;top:226.73px">570nm</div>
<div class="l" style="left:357.05px;top:272.44px">580nm</div>
<div class="l" style="left:400.21px;top:314.29px">590nm</div>
<div class="l" style="left:435.96px;top:349.02px">600nm</div>
<div class="l" style="left:462.63px;top:374.84px">610nm</div>
<div class="l" style="left:480.37px;top:392.07px">620nm</div>
<div class="l" style="left:499.33px;top:410.46px">640nm</div>
<div class="l" style="left:510.13px;top:420.95px">780nm</div>
<div class="l" style="right:509.06px;top:595.67px">380nm</div>
<div class="l" style="right:521.09px;top:587.12px">450nm</div>
<div class="l" style="right:529.83px;top:579.07px">460nm</div>
<div class="l" style="right:543.50px;top:560.21px">470nm</div>
<div class="l" style="right:566.11px;top:509.94px">480nm</div>
<div class="l" style="right:597.73px;top:401.04px">490nm</div>
<div class="l" style="left:234.13px;top:375.30px;letter-spacing:-0.85px">CIE White Point</div>
</div>
<canvas id="ov" width="733" height="686"></canvas>
<div id="axes">
<div class="yl" style="left:4px;top:632px">0.0000</div>
<div class="xl" style="left:42.3px;top:646px">0.0000</div>
<div class="yl" style="left:4px;top:565px">0.1000</div>
<div class="xl" style="left:111.3px;top:646px">0.1000</div>
<div class="yl" style="left:4px;top:498px">0.2000</div>
<div class="xl" style="left:180.3px;top:646px">0.2000</div>
<div class="yl" style="left:4px;top:431px">0.3000</div>
<div class="xl" style="left:249.3px;top:646px">0.3000</div>
<div class="yl" style="left:4px;top:364px">0.4000</div>
<div class="xl" style="left:318.3px;top:646px">0.4000</div>
<div class="yl" style="left:4px;top:296px">0.5000</div>
<div class="xl" style="left:386.3px;top:646px">0.5000</div>
<div class="yl" style="left:4px;top:229px">0.6000</div>
<div class="xl" style="left:455.3px;top:646px">0.6000</div>
<div class="yl" style="left:4px;top:162px">0.7000</div>
<div class="xl" style="left:524.3px;top:646px">0.7000</div>
<div class="yl" style="left:4px;top:95px">0.8000</div>
<div class="xl" style="left:593.3px;top:646px">0.8000</div>
<div class="yl" style="left:4px;top:28px">0.9000</div>
<div class="xl" style="left:662.3px;top:646px">0.9000</div>
</div>
<div class="a" style="left:380.5px;top:663.5px;font-size:13px;color:#000;">x</div>
<div class="a" style="left:16px;top:331px;font-size:13px;color:#000;transform:rotate(-90deg);">y</div>
<script>
(function(){
var L=[[380,0.17411,0.00496],[385,0.17401,0.00498],[390,0.17380,0.00492],[395,0.17356,0.00492],[400,0.17334,0.00480],[405,0.17302,0.00478],[410,0.17258,0.00480],[415,0.17209,0.00483],[420,0.17141,0.00510],[425,0.17030,0.00579],[430,0.16888,0.00690],[435,0.16690,0.00856],[440,0.16441,0.01086],[441,0.16383,0.01138],[442,0.16321,0.01194],[443,0.16255,0.01252],[444,0.16185,0.01314],[445,0.16110,0.01379],[446,0.16031,0.01449],[447,0.15947,0.01523],[448,0.15857,0.01602],[449,0.15763,0.01684],[450,0.15664,0.01770],[451,0.15561,0.01861],[452,0.15452,0.01956],[453,0.15340,0.02055],[454,0.15222,0.02161],[455,0.15099,0.02274],[456,0.14969,0.02395],[457,0.14834,0.02525],[458,0.14693,0.02664],[459,0.14547,0.02812],[460,0.14396,0.02970],[461,0.14241,0.03139],[462,0.14080,0.03321],[463,0.13912,0.03520],[464,0.13736,0.03740],[465,0.13550,0.03988],[466,0.13351,0.04269],[467,0.13137,0.04588],[468,0.12909,0.04945],[469,0.12666,0.05343],[470,0.12412,0.05780],[471,0.12147,0.06259],[472,0.11870,0.06783],[473,0.11581,0.07358],[474,0.11278,0.07990],[475,0.10959,0.08684],[476,0.10626,0.09449],[477,0.10278,0.10286],[478,0.09913,0.11201],[479,0.09530,0.12194],[480,0.09129,0.13270],[481,0.08708,0.14432],[482,0.08268,0.15687],[483,0.07812,0.17042],[484,0.07344,0.18503],[485,0.06871,0.20072],[486,0.06399,0.21747],[487,0.05932,0.23525],[488,0.05467,0.25410],[489,0.05003,0.27400],[490,0.04539,0.29498],[491,0.04076,0.31698],[492,0.03620,0.33990],[493,0.03176,0.36360],[494,0.02749,0.38792],[495,0.02346,0.41270],[496,0.01970,0.43776],[497,0.01627,0.46295],[498,0.01318,0.48821],[499,0.01048,0.51340],[500,0.00817,0.53842],[501,0.00628,0.56307],[502,0.00488,0.58712],[503,0.00398,0.61045],[504,0.00364,0.63301],[505,0.00386,0.65482],[506,0.00465,0.67590],[507,0.00601,0.69612],[508,0.00799,0.71534],[509,0.01060,0.73341],[510,0.01387,0.75019],[511,0.01777,0.76561],[512,0.02224,0.77963],[513,0.02727,0.79210],[514,0.03282,0.80293],[515,0.03885,0.81202],[516,0.04533,0.81939],[517,0.05218,0.82516],[518,0.05933,0.82943],[519,0.06672,0.83227],[520,0.07430,0.83380],[521,0.08205,0.83409],[522,0.08994,0.83329],[523,0.09794,0.83159],[524,0.10602,0.82918],[525,0.11416,0.82621],[526,0.12235,0.82277],[527,0.13055,0.81893],[528,0.13870,0.81477],[529,0.14677,0.81039],[530,0.15472,0.80586],[531,0.16254,0.80124],[532,0.17024,0.79652],[533,0.17785,0.79169],[534,0.18539,0.78673],[535,0.19288,0.78163],[536,0.20031,0.77640],[537,0.20769,0.77105],[538,0.21503,0.76560],[539,0.22234,0.76002],[540,0.22962,0.75433],[541,0.23688,0.74852],[542,0.24413,0.74261],[543,0.25136,0.73661],[544,0.25858,0.73051],[545,0.26578,0.72432],[546,0.27296,0.71806],[547,0.28013,0.71172],[548,0.28729,0.70532],[549,0.29445,0.69884],[550,0.30160,0.69231],[551,0.30876,0.68571],[552,0.31591,0.67906],[553,0.32307,0.67237],[554,0.33022,0.66563],[555,0.33736,0.65885],[556,0.34451,0.65203],[557,0.35166,0.64517],[558,0.35881,0.63829],[559,0.36596,0.63138],[560,0.37310,0.62445],[561,0.38024,0.61750],[562,0.38738,0.61054],[563,0.39451,0.60357],[564,0.40163,0.59659],[565,0.40874,0.58961],[566,0.41584,0.58262],[567,0.42292,0.57563],[568,0.42999,0.56865],[569,0.43704,0.56168],[570,0.44406,0.55471],[571,0.45106,0.54777],[572,0.45804,0.54084],[573,0.46499,0.53393],[574,0.47190,0.52705],[575,0.47877,0.52020],[576,0.48561,0.51339],[577,0.49240,0.50661],[578,0.49915,0.49989],[579,0.50585,0.49321],[580,0.51249,0.48659],[581,0.51907,0.48003],[582,0.52560,0.47353],[583,0.53207,0.46709],[584,0.53846,0.46073],[585,0.54479,0.45443],[586,0.55103,0.44822],[587,0.55719,0.44210],[588,0.56327,0.43606],[589,0.56926,0.43010],[590,0.57515,0.42423],[591,0.58095,0.41845],[592,0.58665,0.41276],[593,0.59222,0.40719],[594,0.59766,0.40176],[595,0.60293,0.39650],[596,0.60804,0.39141],[597,0.61298,0.38649],[598,0.61778,0.38171],[599,0.62246,0.37705],[600,0.62704,0.37249],[601,0.63152,0.36803],[602,0.63590,0.36367],[603,0.64016,0.35943],[604,0.64427,0.35533],[605,0.64823,0.35139],[606,0.65203,0.34763],[607,0.65567,0.34402],[608,0.65917,0.34055],[609,0.66253,0.33722],[610,0.66576,0.33401],[611,0.66887,0.33092],[612,0.67186,0.32795],[613,0.67472,0.32510],[614,0.67746,0.32236],[615,0.68008,0.31975],[616,0.68258,0.31725],[617,0.68497,0.31486],[618,0.68725,0.31259],[619,0.68943,0.31041],[620,0.69150,0.30834],[621,0.69349,0.30637],[622,0.69539,0.30448],[623,0.69721,0.30268],[624,0.69894,0.30095],[625,0.70061,0.29930],[626,0.70219,0.29772],[627,0.70371,0.29622],[628,0.70516,0.29477],[629,0.70656,0.29338],[630,0.70792,0.29203],[631,0.70923,0.29072],[632,0.71050,0.28945],[633,0.71172,0.28823],[634,0.71290,0.28706],[635,0.71403,0.28593],[636,0.71512,0.28485],[637,0.71616,0.28380],[638,0.71716,0.28281],[639,0.71812,0.28185],[640,0.71903,0.28093],[641,0.71991,0.28006],[642,0.72075,0.27922],[643,0.72155,0.27842],[644,0.72231,0.27766],[645,0.72303,0.27695],[646,0.72370,0.27628],[647,0.72433,0.27566],[648,0.72491,0.27508],[649,0.72547,0.27453],[650,0.72599,0.27401],[651,0.72649,0.27351],[652,0.72697,0.27303],[653,0.72743,0.27257],[654,0.72786,0.27214],[655,0.72827,0.27173],[656,0.72866,0.27134],[657,0.72902,0.27098],[658,0.72936,0.27064],[659,0.72968,0.27032],[660,0.72997,0.27003],[661,0.73023,0.26977],[662,0.73047,0.26953],[663,0.73069,0.26931],[664,0.73090,0.26910],[665,0.73109,0.26891],[666,0.73128,0.26872],[667,0.73147,0.26853],[668,0.73165,0.26835],[669,0.73183,0.26817],[670,0.73199,0.26801],[671,0.73215,0.26785],[672,0.73230,0.26770],[673,0.73244,0.26756],[674,0.73258,0.26742],[675,0.73272,0.26728],[676,0.73286,0.26714],[677,0.73300,0.26700],[678,0.73314,0.26686],[679,0.73328,0.26672],[680,0.73342,0.26658],[681,0.73355,0.26645],[682,0.73368,0.26632],[683,0.73381,0.26619],[684,0.73394,0.26606],[685,0.73405,0.26595],[686,0.73414,0.26586],[687,0.73422,0.26578],[688,0.73429,0.26571],[689,0.73434,0.26566],[690,0.73439,0.26561],[691,0.73444,0.26556],[692,0.73448,0.26552],[693,0.73452,0.26548],[694,0.73456,0.26544],[695,0.73459,0.26541],[696,0.73462,0.26538],[697,0.73465,0.26535],[698,0.73467,0.26533],[699,0.73469,0.26531],[700,0.73469,0.26531]];
var CT=[[380,60,20,240],[450,60,20,240],[460,52,20,244],[470,44,18,248],[480,40,36,240],[490,20,90,210],[500,20,176,150],[510,16,236,64],[520,20,250,20],[530,40,245,24],[540,72,224,16],[550,96,216,16],[560,128,192,16],[570,152,176,16],[580,184,156,16],[590,208,136,8],[600,224,120,8],[620,245,95,8],[700,255,80,8]];
var PT=[[0,255,80,8],[0.23,216,48,64],[0.5,160,32,144],[0.8,106,16,216],[1,60,20,240]];
function interp(T,v){for(var i=1;i<T.length;i++){if(v<=T[i][0]){var a=T[i-1],b=T[i],f=(v-a[0])/(b[0]-a[0]);return [a[1]+(b[1]-a[1])*f,a[2]+(b[2]-a[2])*f,a[3]+(b[3]-a[3])*f];}}var z=T[T.length-1];return [z[1],z[2],z[3]];}
var X0=73,SX=620/0.9,Y0=638,SY=604/0.9;
function px(x){return X0+x*SX;} function py(y){return Y0-y*SY;}
var EX=px(1/3),EY=py(1/3);
// boundary samples
var S=[];
function addSeg(x1,y1,c1,x2,y2,c2){var n=Math.max(1,Math.ceil(Math.hypot(x2-x1,y2-y1)*2));for(var i=0;i<n;i++){var f=i/n;S.push([x1+(x2-x1)*f,y1+(y2-y1)*f,c1[0]+(c2[0]-c1[0])*f,c1[1]+(c2[1]-c1[1])*f,c1[2]+(c2[2]-c1[2])*f]);}}
for(var i=0;i<L.length-1;i++){addSeg(Math.round(px(L[i][1])),Math.round(py(L[i][2])),interp(CT,L[i][0]),Math.round(px(L[i+1][1])),Math.round(py(L[i+1][2])),interp(CT,L[i+1][0]));}
var R=L[L.length-1],B=L[0];
var NP=40;for(var i=0;i<NP;i++){var f1=i/NP,f2=(i+1)/NP;var xa=R[1]+(B[1]-R[1])*f1,ya=R[2]+(B[2]-R[2])*f1,xb=R[1]+(B[1]-R[1])*f2,yb=R[2]+(B[2]-R[2])*f2;var RX=Math.round(px(R[1])),RY=Math.round(py(R[2])),BX=Math.round(px(B[1])),BY=Math.round(py(B[2]));addSeg(RX+(BX-RX)*f1,RY+(BY-RY)*f1,interp(PT,f1),RX+(BX-RX)*f2,RY+(BY-RY)*f2,interp(PT,f2));}
var NB=16384,LD=new Float32Array(NB),LC=new Float32Array(NB*3),has=new Uint8Array(NB);
var SA=S.map(function(s){var a=Math.atan2(s[1]-EY,s[0]-EX);return [a,Math.hypot(s[0]-EX,s[1]-EY),s[2],s[3],s[4]];});
SA.sort(function(a,b){return a[0]-b[0];});
for(var k=0;k<NB;k++){var ang=-Math.PI+(k+0.5)*2*Math.PI/NB;
  // binary search
  var lo=0,hi=SA.length-1;while(hi-lo>1){var m=(lo+hi)>>1;if(SA[m][0]<ang)lo=m;else hi=m;}
  var a=SA[lo],b=SA[hi];var f;
  if(ang<SA[0][0]||ang>SA[SA.length-1][0]){a=SA[SA.length-1];b=SA[0];var span=(b[0]+2*Math.PI)-a[0];var d=ang-a[0];if(d<0)d+=2*Math.PI;f=d/span;}
  else{f=(b[0]==a[0])?0:(ang-a[0])/(b[0]-a[0]);}
  LD[k]=a[1]+(b[1]-a[1])*f;LC[k*3]=a[2]+(b[2]-a[2])*f;LC[k*3+1]=a[3]+(b[3]-a[3])*f;LC[k*3+2]=a[4]+(b[4]-a[4])*f;}
var c=document.getElementById('cv'),g=c.getContext('2d');
g.fillStyle='#ffffff';g.fillRect(72,33,623,607);
g.fillStyle='#a0a0a0';g.fillRect(72,33,1,606);g.fillRect(72,33,622,1);
g.fillStyle='#c0c0c0';g.fillRect(73,34,1,604);g.fillRect(73,638,621,1);
var W=733,H=686;var img=g.getImageData(0,0,W,H),d=img.data;
var PV=[];for(var i=0;i<L.length;i++){PV.push([Math.round(px(L[i][1])),Math.round(py(L[i][2]))]);}
for(var Yp=34;Yp<638;Yp++){var xl=1e9,xr=-1e9;
  for(var i=0;i<PV.length;i++){var a=PV[i],b=PV[(i+1)%PV.length];var y1=a[1],y2=b[1];
    if(Yp<Math.min(y1,y2)||Yp>Math.max(y1,y2))continue;
    if(y1==y2){xl=Math.min(xl,a[0],b[0]);xr=Math.max(xr,a[0],b[0]);}
    else{var xx=a[0]+(b[0]-a[0])*(Yp-y1)/(y2-y1);xl=Math.min(xl,xx);xr=Math.max(xr,xx);}}
  if(xl>xr)continue;
  var x0=Math.max(74,Math.ceil(xl-1e-9)),x1=Math.min(693,Math.floor(xr+1e-9));
  for(var Xp=x0;Xp<=x1;Xp++){
  var dx=Xp-EX,dy=Yp-EY;var ang=Math.atan2(dy,dx);var k=Math.floor((ang+Math.PI)/(2*Math.PI)*NB);if(k>=NB)k=NB-1;if(k<0)k=0;
  var dist=Math.hypot(dx,dy);var t=Math.min(1,dist/LD[k]);
  var o=(Yp*W+Xp)*4;d[o]=255*(1-t)+LC[k*3]*t;d[o+1]=255*(1-t)+LC[k*3+1]*t;d[o+2]=255*(1-t)+LC[k*3+2]*t;d[o+3]=255;
}}
g.putImageData(img,0,0);
var right=[500,510,520,530,540,550,560,570,580,590,600,610,620,640,780],left=[380,450,460,470,480,490];
function loc(w){if(w==780)return [0.7347,0.2653];for(var i=0;i<L.length;i++)if(L[i][0]==w)return [L[i][1],L[i][2]];}
// overlay
var ov=document.getElementById('ov'),q=ov.getContext('2d');
var oimg=q.createImageData(W,H),od=oimg.data;
function put(x,y,r,gg,b){x=Math.round(x);y=Math.round(y);if(x<73||x>=694||y<34||y>=639)return;var o=(y*W+x)*4;od[o]=r;od[o+1]=gg;od[o+2]=b;od[o+3]=255;}
function line(x0,y0,x1,y1,r,gg,b){x0=Math.round(x0);y0=Math.round(y0);x1=Math.round(x1);y1=Math.round(y1);var dx=Math.abs(x1-x0),sx=x0<x1?1:-1,dy=-Math.abs(y1-y0),sy=y0<y1?1:-1,err=dx+dy;for(;;){put(x0,y0,r,gg,b);if(x0==x1&&y0==y1)break;var e2=2*err;if(e2>=dy){err+=dy;x0+=sx;}if(e2<=dx){err+=dx;y0+=sy;}}}
// markers on labels
right.concat(left).forEach(function(w){var p=loc(w);var X=Math.round(px(p[0])),Y=Math.round(py(p[1]));put(X,Y,128,128,128);put(X-1,Y,128,128,128);put(X+1,Y,128,128,128);put(X,Y-1,128,128,128);put(X,Y+1,128,128,128);});
(function(){var X=Math.round(EX),Y=Math.round(EY);put(X,Y,128,128,128);put(X-1,Y,128,128,128);put(X+1,Y,128,128,128);put(X,Y-1,128,128,128);put(X,Y+1,128,128,128);})();
// grid
var GR=154,GG=154,GB=0;
for(var i=1;i<=8;i++){var X=Math.round(px(i*0.1));line(X,34,X,638,GR,GG,GB);}
for(var i=1;i<=17;i++){var Y=Math.round(py(i*0.05));line(73,Y,693,Y,GR,GG,GB);}
// planck curve
var PL=[[0.6955,0.3042],[0.6885,0.3110],[0.6809,0.3184],[0.6727,0.3262],[0.6640,0.3343],[0.6547,0.3428],[0.6448,0.3514],[0.6344,0.3601],[0.6235,0.3687],[0.6120,0.3770],[0.5999,0.3850],[0.5872,0.3923],[0.5740,0.3989],[0.5602,0.4046],[0.5460,0.4092],[0.5313,0.4125],[0.5163,0.4146],[0.5010,0.4153],[0.4857,0.4146],[0.4703,0.4127],[0.4551,0.4095],[0.4402,0.4052],[0.4257,0.3999],[0.4117,0.3938],[0.3983,0.3871],[0.3856,0.3799],[0.3736,0.3723],[0.3623,0.3646],[0.3518,0.3568],[0.3420,0.3491],[0.3330,0.3415],[0.3247,0.3341],[0.3171,0.3271],[0.3101,0.3203],[0.3038,0.3139],[0.2980,0.3078],[0.2928,0.3021],[0.2880,0.2968],[0.2837,0.2919],[0.2798,0.2873],[0.2763,0.2831],[0.2731,0.2792],[0.2702,0.2756],[0.2676,0.2723],[0.2652,0.2692],[0.2631,0.2665],[0.2611,0.2639],[0.2594,0.2616],[0.2578,0.2594],[0.2563,0.2574],[0.2550,0.2556],[0.2538,0.2540],[0.2527,0.2524],[0.2517,0.2510],[0.2508,0.2497],[0.2499,0.2486],[0.2491,0.2475],[0.2484,0.2465],[0.2478,0.2456],[0.2472,0.2447]];
for(var i=0;i<PL.length-1;i++){line(px(PL[i][0]),py(PL[i][1]),px(PL[i+1][0]),py(PL[i+1][1]),128,128,128);}
// quad
var Q=[[280,408],[376,348],[417,343],[417,382],[376,382],[280,453],[280,408]];
for(var i=0;i<Q.length-1;i++)line(Q[i][0],Q[i][1],Q[i+1][0],Q[i+1][1],0,0,0);
line(376,348,376,382,0,0,0);
Q.forEach(function(p){for(var a=-1;a<=1;a++)for(var b=-1;b<=1;b++)put(p[0]+a,p[1]+b,0,0,0);});
// red cursor
line(334,34,334,638,255,0,0);line(73,381,693,381,255,0,0);
// red dot
for(var a=-3;a<=3;a++)for(var b=-3;b<=3;b++){if(a*a+b*b<=6)put(334+a,381+b,255,0,0);}
q.putImageData(oimg,0,0);
// ticks (outside plot)
q.fillStyle='#000';
for(var i=0;i<=9;i++){var X=Math.round(px(i*0.1));q.fillRect(X,640,1,5);var Y=Math.round(py(i*0.1));q.fillRect(66,Y,5,1);}
})();
</script>
</body></html>
